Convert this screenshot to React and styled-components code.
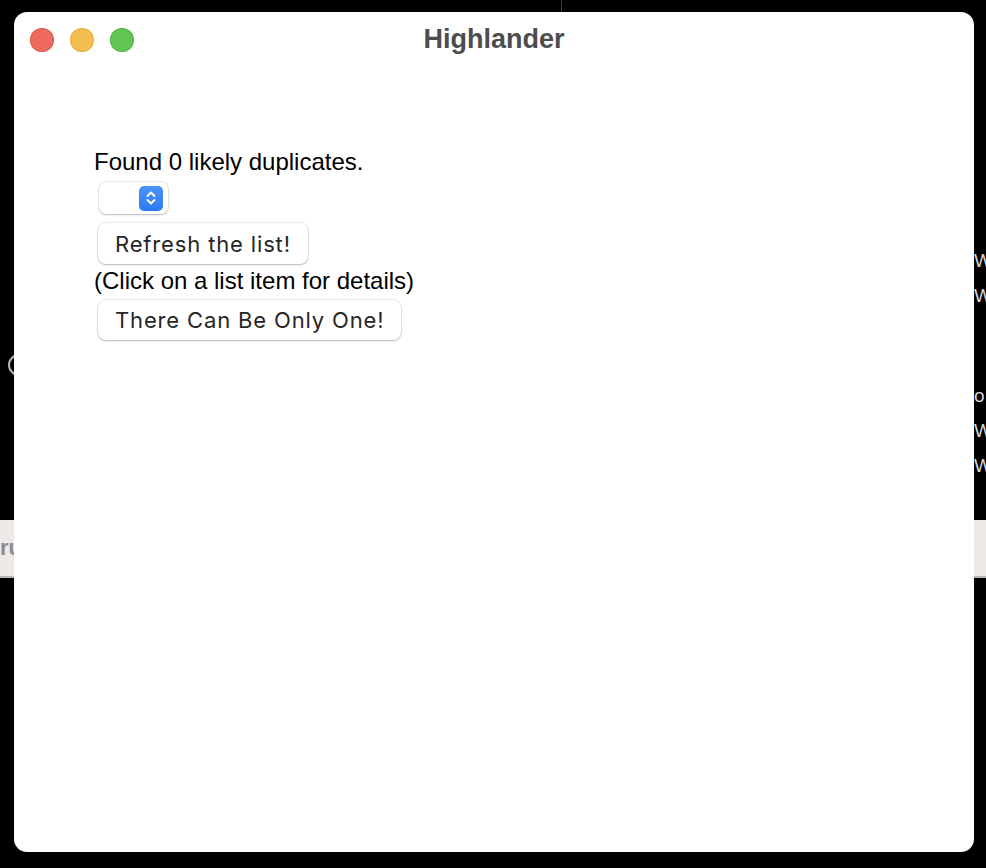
import React from 'react';
import styled, { createGlobalStyle } from 'styled-components';

const GlobalStyle = createGlobalStyle`
  html, body {
    margin: 0;
    padding: 0;
    background: #000;
  }
  * {
    box-sizing: border-box;
  }
`;

const Desktop = styled.div`
  position: relative;
  width: 986px;
  height: 868px;
  overflow: hidden;
  background: #000;
`;

/* the app lying behind the window */
const BackApp = styled.div`
  display: flex;
  flex-direction: column;
  height: 100%;
`;

const BackTop = styled.div`
  display: grid;
  grid-template-columns: 14px 1fr 12px;
  height: 520px;
`;

const LeftGutter = styled.div`
  padding-top: 354px;
`;

const RingIcon = styled.div`
  width: 22px;
  height: 22px;
  margin-left: 8px;
  border: 2px solid #b5b5b5;
  border-radius: 50%;
`;

const MiddleGutter = styled.div`
  display: flex;
  align-items: flex-start;
`;

const Divider = styled.div`
  width: 1px;
  height: 12px;
  margin-left: 547px;
  background: #3c3c3c;
`;

const RightGutter = styled.div`
  display: flex;
  flex-direction: column;
  padding-top: 243px;
  font-family: 'Liberation Sans', Arial, sans-serif;
  font-size: 19px;
  color: #d4d4d4;
  line-height: 35px;
  white-space: nowrap;
`;

const BackLine = styled.div`
  height: ${p => p.gap || 35}px;
  line-height: 35px;
`;

const Band = styled.div`
  height: 58px;
  background: #ece9e6;
  border-bottom: 2px solid #bab7b4;
  display: flex;
  align-items: center;
  font-family: 'Liberation Sans', Arial, sans-serif;
  font-weight: bold;
  font-size: 22px;
  color: #8e8c8a;
`;

const Window = styled.div`
  position: absolute;
  left: 14px;
  top: 12px;
  width: 960px;
  height: 840px;
  background: #fff;
  border-radius: 13px;
  display: flex;
  flex-direction: column;
  overflow: hidden;
`;

const TitleBar = styled.div`
  position: relative;
  height: 56px;
  display: flex;
  align-items: center;
  justify-content: center;
`;

const Lights = styled.div`
  position: absolute;
  left: 16px;
  top: 16px;
  display: flex;
  gap: 16px;
`;

const Light = styled.div`
  width: 24px;
  height: 24px;
  border-radius: 50%;
  background: ${p => p.color};
  box-shadow: inset 0 0 0 1px ${p => p.edge};
`;

const Title = styled.div`
  font-family: 'Liberation Sans', Arial, sans-serif;
  font-weight: bold;
  font-size: 27px;
  color: #4d4d4d;
  margin-top: -1px;
`;

const Content = styled.div`
  display: flex;
  flex-direction: column;
  align-items: flex-start;
  padding: 80px 0 0 80px;
`;

const Label = styled.div`
  font-family: 'Liberation Sans', Arial, sans-serif;
  font-size: 24px;
  line-height: 28px;
  color: #000;
  margin-top: ${p => p.top || 0}px;
`;

const Select = styled.div`
  width: 69px;
  height: 32px;
  margin: 6px 0 0 5px;
  border-radius: 7px;
  background: #fff;
  box-shadow: 0 0 0 1px rgba(0, 0, 0, 0.07), 0 1px 2px rgba(0, 0, 0, 0.22);
  display: flex;
  justify-content: flex-end;
  align-items: center;
  padding-right: 5px;
`;

const Stepper = styled.div`
  width: 24px;
  height: 25px;
  border-radius: 5px;
  background: linear-gradient(#4b92f8, #2d79f4);
  display: flex;
  align-items: center;
  justify-content: center;
`;

const PushButton = styled.button`
  height: ${p => p.h}px;
  margin: ${p => p.top}px 0 0 4px;
  padding: 0 17px;
  border: none;
  border-radius: 8px;
  background: #fff;
  box-shadow: 0 0 0 1px rgba(0, 0, 0, 0.07), 0 1px 2px rgba(0, 0, 0, 0.24);
  font-family: Inter, 'Liberation Sans', sans-serif;
  font-size: 22px;
  letter-spacing: 0.85px;
  color: #262626;
  cursor: pointer;
`;

function Chevrons() {
  return (
    <svg width="14" height="18" viewBox="0 0 14 18" fill="none">
      <path d="M3.5 7 L7 3.5 L10.5 7" stroke="#fff" strokeWidth="2" strokeLinecap="round" strokeLinejoin="round" />
      <path d="M3.5 11 L7 14.5 L10.5 11" stroke="#fff" strokeWidth="2" strokeLinecap="round" strokeLinejoin="round" />
    </svg>
  );
}

export default function App() {
  return (
    <Desktop>
      <GlobalStyle />
      <BackApp>
        <BackTop>
          <LeftGutter>
            <RingIcon />
          </LeftGutter>
          <MiddleGutter>
            <Divider />
          </MiddleGutter>
          <RightGutter>
            <BackLine>W</BackLine>
            <BackLine gap={100}>W</BackLine>
            <BackLine>o</BackLine>
            <BackLine>W</BackLine>
            <BackLine>W</BackLine>
          </RightGutter>
        </BackTop>
        <Band>ru</Band>
      </BackApp>

      <Window>
        <TitleBar>
          <Lights>
            <Light color="#ed6a5e" edge="rgba(208, 80, 70, 0.6)" />
            <Light color="#f5bf4f" edge="rgba(214, 160, 50, 0.6)" />
            <Light color="#61c554" edge="rgba(72, 168, 60, 0.6)" />
          </Lights>
          <Title>Highlander</Title>
        </TitleBar>
        <Content>
          <Label>Found 0 likely duplicates.</Label>
          <Select>
            <Stepper>
              <Chevrons />
            </Stepper>
          </Select>
          <PushButton h={41} top={9}>Refresh the list!</PushButton>
          <Label top={3}>(Click on a list item for details)</Label>
          <PushButton h={40} top={5}>There Can Be Only One!</PushButton>
        </Content>
      </Window>
    </Desktop>
  );
}
